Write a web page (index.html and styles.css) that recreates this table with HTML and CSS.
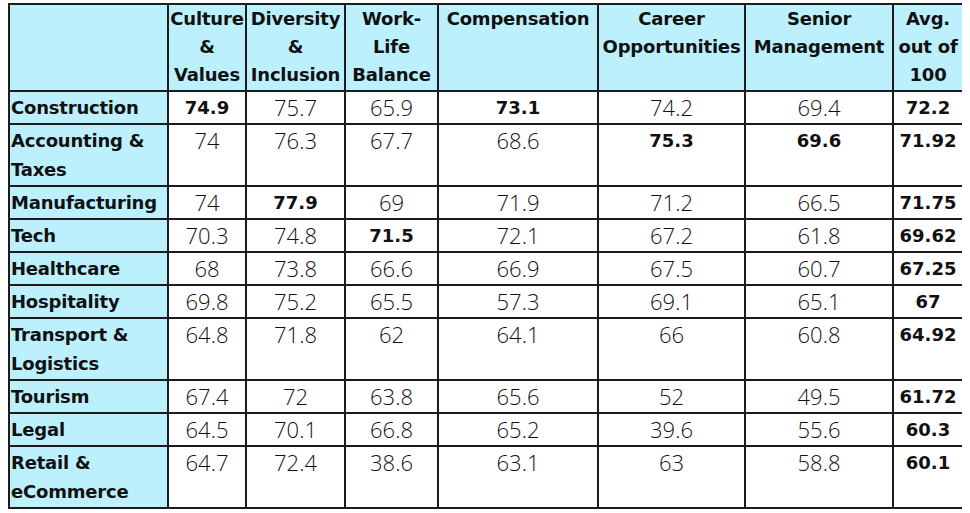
FILE: index.html
```html
<!DOCTYPE html>
<html>
<head>
<meta charset="utf-8">
<link rel="stylesheet" href="styles.css">
</head>
<body>
<table class="grid">
  <colgroup>
    <col class="c-label"><col class="c-culture"><col class="c-div"><col class="c-wlb"><col class="c-comp"><col class="c-career"><col class="c-senior"><col class="c-avg">
  </colgroup>
  <thead>
    <tr>
      <th class="blank"></th>
      <th>Culture &amp; Values</th>
      <th>Diversity &amp; Inclusion</th>
      <th>Work-Life Balance</th>
      <th>Compensation</th>
      <th>Career Opportunities</th>
      <th>Senior Management</th>
      <th>Avg. out of 100</th>
    </tr>
  </thead>
  <tbody>
    <tr><th class="row">Construction</th><td class="b">74.9</td><td>75.7</td><td>65.9</td><td class="b">73.1</td><td>74.2</td><td>69.4</td><td class="b">72.2</td></tr>
    <tr><th class="row">Accounting &amp; Taxes</th><td>74</td><td>76.3</td><td>67.7</td><td>68.6</td><td class="b">75.3</td><td class="b">69.6</td><td class="b">71.92</td></tr>
    <tr><th class="row">Manufacturing</th><td>74</td><td class="b">77.9</td><td>69</td><td>71.9</td><td>71.2</td><td>66.5</td><td class="b">71.75</td></tr>
    <tr><th class="row">Tech</th><td>70.3</td><td>74.8</td><td class="b">71.5</td><td>72.1</td><td>67.2</td><td>61.8</td><td class="b">69.62</td></tr>
    <tr><th class="row">Healthcare</th><td>68</td><td>73.8</td><td>66.6</td><td>66.9</td><td>67.5</td><td>60.7</td><td class="b">67.25</td></tr>
    <tr><th class="row">Hospitality</th><td>69.8</td><td>75.2</td><td>65.5</td><td>57.3</td><td>69.1</td><td>65.1</td><td class="b">67</td></tr>
    <tr><th class="row">Transport &amp; Logistics</th><td>64.8</td><td>71.8</td><td>62</td><td>64.1</td><td>66</td><td>60.8</td><td class="b">64.92</td></tr>
    <tr><th class="row">Tourism</th><td>67.4</td><td>72</td><td>63.8</td><td>65.6</td><td>52</td><td>49.5</td><td class="b">61.72</td></tr>
    <tr><th class="row">Legal</th><td>64.5</td><td>70.1</td><td>66.8</td><td>65.2</td><td>39.6</td><td>55.6</td><td class="b">60.3</td></tr>
    <tr><th class="row">Retail &amp; eCommerce</th><td>64.7</td><td>72.4</td><td>38.6</td><td>63.1</td><td>63</td><td>58.8</td><td class="b">60.1</td></tr>
  </tbody>
</table>
</body>
</html>
```

FILE: styles.css
```css
html, body {
  background: #ffffff;
}
body {
  margin: 3px 8px;
}
.grid {
  border-collapse: collapse;
  table-layout: fixed;
  width: 954px;
  color: #111;
}
.c-label { width: 159px; }
.c-culture { width: 78px; }
.c-div { width: 99px; }
.c-wlb { width: 93px; }
.c-comp { width: 160px; }
.c-career { width: 147px; }
.c-senior { width: 148px; }
.c-avg { width: 70px; }

.grid th, .grid td {
  border: 2px solid #1c1c1c;
  padding: 1px 2px;
  line-height: 29px;
  vertical-align: top;
  overflow: hidden;
}
.grid thead th {
  line-height: 28px;
  padding: 0 1px 1px;
}
.grid th {
  background: #bdf0fd;
  font-family: "DejaVu Sans", sans-serif;
  font-weight: bold;
  font-size: 18px;
  letter-spacing: -0.2px;
  text-align: center;
  white-space: normal;
}
.grid th.row {
  text-align: left;
  padding-left: 1px;
  padding-right: 0;
}
.grid td {
  font-family: "Open Sans", sans-serif;
  font-weight: 300;
  font-size: 22px;
  text-align: center;
  background: #ffffff;
}
.grid td.b {
  font-family: "DejaVu Sans", sans-serif;
  font-weight: bold;
  font-size: 18px;
}
```
